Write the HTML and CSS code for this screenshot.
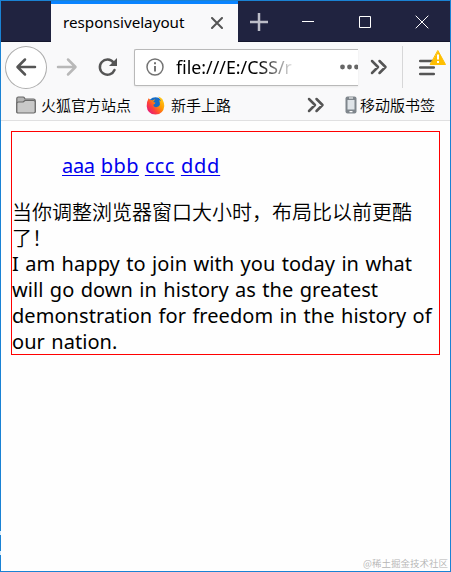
FILE: index.html
```
<!DOCTYPE html>
<html lang="zh-CN">
<head>
  <meta charset="UTF-8">
  <meta name="viewport" content="width=device-width, initial-scale=1.0">
  <title>responsivelayout</title>
  <link rel="stylesheet" href="styles.css">
</head>
<body>
  <div class="window">
    <!-- Tab bar -->
    <div class="tabbar">
      <div class="tab">
        <span class="tab-title">responsivelayout</span>
        <svg class="tab-close" width="12" height="12" viewBox="0 0 12 12"><path d="M1 1l10 10M11 1L1 11"/></svg>
      </div>
      <svg class="new-tab" width="18" height="18" viewBox="0 0 18 18"><path d="M9 0v18M0 9h18"/></svg>
      <div class="controls">
        <svg width="14" height="14" viewBox="0 0 14 14"><path d="M1 6.5h12"/></svg>
        <svg width="14" height="14" viewBox="0 0 14 14"><path d="M1.5 1.5h11v11h-11z"/></svg>
        <svg width="14" height="14" viewBox="0 0 14 14"><path d="M.7 .7l12.6 12.6M13.3 .7L.7 13.3"/></svg>
      </div>
    </div>

    <!-- Navigation -->
    <div class="toolbar">
      <div class="back">
        <svg width="22" height="20" viewBox="0 0 22 20"><path d="M20 10H3M10 2.5L2.5 10l7.500 7.500"/></svg>
      </div>
      <svg class="forward" width="22" height="20" viewBox="0 0 22 20"><path d="M2 10h17M12 2.500l7.500 7.500-7.500 7.500"/></svg>
      <svg class="reload" width="22" height="20" viewBox="0 0 22 20"><path d="M16.500 5.500A7.600 7.600 0 1 0 17.500 13" /><path class="solid" d="M20 1v8h-8z"/></svg>
      <div class="urlbar">
        <svg class="info" width="18" height="18" viewBox="0 0 18 18"><circle cx="9" cy="9" r="8"/><path class="stem" d="M9 8v5.500M9 4.300v2"/></svg>
        <span class="url">file:///E:/CSS/r</span>
        <svg class="dots" width="18" height="6" viewBox="0 0 18 6"><circle cx="2.500" cy="3" r="2.400"/><circle cx="9.500" cy="3" r="2.400"/><circle cx="16.500" cy="3" r="2.400"/></svg>
      </div>
      <svg class="more" width="18" height="16" viewBox="0 0 18 16"><path d="M2 2l6 6-6 6M9.500 2l6 6-6 6"/></svg>
      <div class="menu">
        <svg width="16" height="16" viewBox="0 0 16 16"><path d="M1.200 2h13.600M1.200 8.500h13.600M1.200 15h13.600"/></svg>
        <svg class="warning" width="16" height="16" viewBox="0 0 16 16"><path d="M8 .8L15.500 14.500H.5z"/><path class="mark" d="M8 4.500v5M8 11v2"/></svg>
      </div>
    </div>

    <!-- Bookmarks -->
    <div class="bookmarks">
      <svg class="folder" width="20" height="18" viewBox="0 0 20 18"><path class="tabpart" d="M.8 16V2.500Q.8 1 2.300 1H7q1 0 1.500 1l.5 1h8.500q1.700 0 1.700 1.500V16z"/><path d="M.8 16V7.500Q.8 6 2.500 6H7l2-1.500h8.500q1.700 0 1.700 1.500v9.500q0 1.500-1.500 1.500h-15.400Q.8 17 .8 16z"/></svg>
      <span class="label sites">火狐官方站点</span>
      <svg class="firefox" width="19" height="19" viewBox="0 0 19 19">
        <defs>
          <linearGradient id="flame" x1="1" y1="0" x2=".1" y2=".8">
            <stop offset="0" stop-color="#ffe226"/>
            <stop offset=".45" stop-color="#ff9800"/>
            <stop offset=".75" stop-color="#ff4238"/>
            <stop offset="1" stop-color="#e82070"/>
          </linearGradient>
        </defs>
        <circle cx="9.500" cy="9" r="7.700" fill="#176cc6"/>
        <path fill="url(#flame)" d="M2.600 2.200l2.200 2.100q1.100-.5 2 .1L8.800 3q-.1 2-1.700 3 1 .3 2.400.7-.5 1.400-2.200 2 .1 2.400 2.500 2.500 2.900.2 4.100-2.100.6-2.900-1-4.900 1.200.3 1.900 1.100Q13.900 2.500 12.200.6q3.900 1.200 5 4.300Q18.400 7.100 18.300 10q-.8 8.200-8.800 8.600Q1.300 18 .7 10.200.6 5.600 2.600 2.200z"/>
      </svg>
      <span class="label start">新手上路</span>
      <svg class="more small" width="18" height="16" viewBox="0 0 18 16"><path d="M2 2l6 6-6 6M9.500 2l6 6-6 6"/></svg>
      <svg class="phone" width="12" height="18" viewBox="0 0 12 18"><rect x=".5" y=".5" width="11" height="17" rx="2" fill="#7f868c"/><path fill="#dfe4e8" d="M2.500 4h7v9.500h-7z"/><path fill="#fff" d="M4 1.500h4v1H4zM4.500 15h3v1.200h-3z"/></svg>
      <span class="label mobile">移动版书签</span>
    </div>

    <!-- Page -->
    <div class="page">
      <div class="box">
        <ul class="nav">
          <li><a class="a" href="#">aaa</a></li>
          <li><a class="b" href="#">bbb</a></li>
          <li><a class="c" href="#">ccc</a></li>
          <li><a class="d" href="#">ddd</a></li>
        </ul>
        <div class="cn">当你调整浏览器窗口大小时，布局比以前更酷<br>了！</div>
        <div class="en">I am happy to join with you today in what<br>will go down in history as the greatest<br>demonstration for freedom in the history of<br>our nation.</div>
      </div>
    </div>
    <div class="watermark">@稀土掘金技术社区</div>
  </div>
</body>
</html>
```
FILE: styles.css
```
* {
  box-sizing: border-box;
}

body {
  margin: 0;
  font-family: "Noto Sans", "Noto Sans CJK SC", sans-serif;
  color: #000;
}

svg {
  display: block;
  flex: none;
  fill: none;
  stroke: #555;
  stroke-width: 2.5;
  stroke-linecap: round;
  stroke-linejoin: round;
}

.window {
  position: relative;
  display: flex;
  flex-direction: column;
  height: 572px;
  border: 1px solid #1a82d4;
  background: #fefefe;
}

/* breaks in the left edge of the window frame */
.window::before,
.window::after {
  content: "";
  position: absolute;
  left: -1px;
  top: 530px;
  width: 1px;
  height: 4px;
  background: #d9ecf9;
}

.window::after {
  top: 550px;
}

/* Tab bar */
.tabbar {
  display: flex;
  align-items: center;
  height: 41px;
  padding-left: 50px;
  background: #202340;
  box-shadow: inset 0 -1px #14162c;
}

.tab {
  display: flex;
  align-items: center;
  width: 187px;
  height: 41px;
  padding: 0 15px 0 12px;
  border-top: 3px solid #0a84ff;
  background: #f9f9fa;
}

.tab-title {
  flex: 1;
  font-size: 15.2px;
  line-height: 20px;
  white-space: nowrap;
  position: relative;
  top: -1px;
}

.tab-close {
  stroke-width: 2;
}

.new-tab {
  margin-left: 12px;
  stroke: #bcbdc8;
  stroke-width: 2.5;
  stroke-linecap: butt;
}

.controls {
  display: flex;
  gap: 43px;
  margin-left: 33px;
}

.controls svg {
  stroke: #fff;
  stroke-width: 1;
  stroke-linecap: butt;
  stroke-linejoin: miter;
}

/* Navigation */
.toolbar {
  display: flex;
  align-items: center;
  height: 48px;
  padding: 2px 0 0 4px;
  background: #f9f9fa;
}

.back {
  display: flex;
  align-items: center;
  justify-content: center;
  width: 42px;
  height: 43px;
  border: 1px solid #adadad;
  border-radius: 50%;
  background: #fff;
}

.forward {
  margin-left: 9px;
  stroke: #b8b8b8;
}

.reload {
  margin-left: 19px;
}

.reload .solid {
  fill: #555;
  stroke: none;
}

.urlbar {
  display: flex;
  align-items: center;
  width: 224px;
  height: 37px;
  margin-left: 15px;
  padding-left: 11px;
  border: 1px solid #b9b9b9;
  border-right: none;
  border-radius: 2px 0 0 2px;
  background: #fff;
  overflow: hidden;
  box-shadow: 0 1px 2px #e8e8e8;
}

.info {
  stroke: #737373;
  stroke-width: 1.5;
}

.info .stem {
  stroke-width: 2;
  stroke-linecap: butt;
}

.url {
  flex: none;
  width: 164px;
  margin-left: 12px;
  font-size: 17.8px;
  line-height: 24px;
  background: linear-gradient(90deg, #000 82px, rgba(0, 0, 0, 0) 120px);
  background-clip: text;
  -webkit-background-clip: text;
  color: transparent;
}

.dots {
  fill: #666;
  stroke: none;
}

.more {
  margin-left: 12px;
}

.menu {
  position: relative;
  height: 42px;
  margin-left: 14px;
  padding: 13px 0 0 16px;
  border-left: 1px solid #d7d7d8;
}

.menu svg {
  overflow: visible;
}

.menu .warning {
  position: absolute;
  left: 27px;
  top: 4px;
  fill: #ffbf00;
  stroke: #ffbf00;
  stroke-width: 1;
}

.warning .mark {
  stroke: #fff;
  stroke-width: 2;
  stroke-linecap: butt;
}

/* Bookmarks */
.bookmarks {
  display: flex;
  align-items: center;
  height: 31px;
  padding-left: 15px;
  border-bottom: 1px solid #e0e0e1;
  background: #f9f9fa;
}

.label {
  font-family: "Noto Sans CJK SC", sans-serif;
  font-size: 15px;
  font-weight: 350;
  line-height: 20px;
  white-space: nowrap;
}

.folder {
  fill: #c8c8c8;
  stroke: #686868;
  stroke-width: 1.2;
}

.folder .tabpart {
  fill: #b4b4b4;
}

.sites {
  width: 91px;
  margin-left: 5px;
}

.firefox {
  margin-left: 14px;
  stroke: none;
}

.start {
  margin-left: 6px;
}

.small {
  margin-left: 76px;
}

.phone {
  margin-left: 20px;
  stroke: none;
}

.mobile {
  margin-left: 3px;
}

/* Page */
.page {
  padding: 10px;
}

.box {
  width: 429px;
  height: 224px;
  padding-top: 1px;
  border: 1px solid #f00;
  font-size: 20px;
  line-height: 26px;
  white-space: nowrap;
}

.nav {
  display: flex;
  gap: 6px;
  margin: 20px 0;
  padding-left: 50px;
  list-style: none;
}

.nav a {
  color: #00e;
  text-underline-offset: 2px;
  text-decoration-thickness: 1px;
}

.nav .a {
  letter-spacing: -0.3px;
}

.nav .b {
  letter-spacing: 0.4px;
}

.nav .c {
  letter-spacing: 0.4px;
}

.nav .d {
  letter-spacing: 0.8px;
}

.cn {
  font-family: "Noto Sans CJK SC", sans-serif;
  font-weight: 350;
}

.en {
  height: 103px;
  letter-spacing: 0.06px;
  word-spacing: 1.1px;
}

.watermark {
  position: absolute;
  right: 2px;
  bottom: 0;
  font-family: "Noto Sans CJK SC", sans-serif;
  font-size: 9.5px;
  font-weight: 350;
  line-height: 15px;
  color: #b4b4b4;
}
```
